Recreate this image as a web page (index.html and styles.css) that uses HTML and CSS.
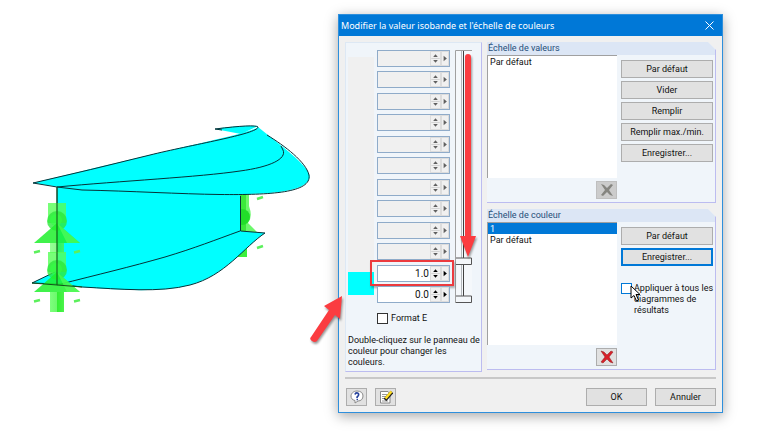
FILE: index.html
```html
<!DOCTYPE html>
<html lang="fr">
<head>
    <meta charset="UTF-8">
    <meta name="viewport" content="width=device-width, initial-scale=1.0">
    <title>Modifier la valeur isobande et l'échelle de couleurs</title>
    <link rel="stylesheet" href="styles.css">
</head>
<body>
    <main class="scene">
        <svg class="model" viewBox="0 0 338 442" aria-label="Modèle">
            <defs>
                <linearGradient id="post" x1="0" x2="1" y1="0" y2="0">
                    <stop offset="0" stop-color="#7dff7d"/>
                    <stop offset="0.5" stop-color="#6cf86c"/>
                    <stop offset="0.5" stop-color="#30ee30"/>
                    <stop offset="1" stop-color="#4cf34c"/>
                </linearGradient>
                <g id="support">
                    <rect x="-9" y="-37" width="18" height="20" fill="#5f5" opacity="0.8"/>
                    <circle cx="0" cy="-19" r="10" fill="#2de83c" opacity="0.8"/>
                    <circle cx="-1" cy="-20" r="6" fill="#3f4" opacity="0.6"/>
                    <path d="M0-17L-23 3H23Z" fill="#1ff02c" opacity="0.85"/>
                    <path d="M0-17L23 3H10Z" fill="#6f6" opacity="0.5"/>
                    <path d="M-23 12.500L-17 11M17 12.500L23 11" stroke="#5cf05c" stroke-width="2.500"/>
                </g>
            </defs>
            <!-- rear support -->
            <path d="M240 194H249V206Q253 217 248 223L257 232H240Z" fill="#6cf86c"/>
            <path d="M240 194H246V231H240Z" fill="#3be83b"/>
            <circle cx="242" cy="217" r="8" fill="#22dd2a"/>
            <rect x="234" y="244" width="13" height="13" fill="#3cf03c"/>
            <path d="M257 199L263 197M257 248L263 246" stroke="#5cf05c" stroke-width="2.500"/>
            <!-- girder -->
            <path d="M57 186L240 190V231L265 233C244 247 225 276 190 285C160 293 120 290 82 287L57 285Z" fill="#0ff"/>
            <path d="M32 283L57 271V285Z" fill="#0ff"/>
            <path d="M215 129L241 134L258 126Q240 125 215 129Z" fill="#0ff"/>
            <path d="M33 183C110 164 180 148 235 135Q257 129 258 127L283 147Q314 172 309 179C303 194 260 195 200 194L80 190Z" fill="#0ff"/>
            <g fill="none" stroke="#063238" stroke-width="1">
                <path d="M215 129Q255 124 258 127C258 134 190 145 150 155Q90 170 33 183L57 187L82 190C130 191 180 194 220 194.500C270 195 312 193 309 175C306 162 285 146 267 135"/>
                <path d="M215 129L222 130M57 187C120 181 200 177 240 171C270 167 287 159 283 150L281 146"/>
                <path d="M57 187V285M240.500 196V231L265 233C244 247 225 276 190 285C160 293 120 289 82 287L57 284L32 283L57 271"/>
                <path d="M57 285C100 274 130 267 165 257C195 248 215 240 240 231"/>
            </g>
            <use href="#support" x="57" y="240"/>
            <rect x="50" y="243" width="14" height="10" fill="url(#post)" opacity="0.8"/>
            <use href="#support" x="57" y="289"/>
            <rect x="50" y="292" width="14" height="20" fill="url(#post)"/>
            <path d="M57 187V285M32 283L57 285L82 287" fill="none" stroke="#14501c" stroke-width="1"/>
        </svg>
    </main>

    <section class="dialog">
        <header class="titlebar">
            <h1>Modifier la valeur isobande et l'échelle de couleurs</h1>
            <button class="close" aria-label="Fermer">
                <svg viewBox="0 0 9 9"><path d="M0.500 0.500L8.500 8.500M8.500 0.500L0.500 8.500"/></svg>
            </button>
        </header>

        <div class="content">
            <div class="panel values">
                <div class="value-area">
                    <div class="swatches">
                        <div class="no-color"></div>
                        <button class="swatch" aria-label="Couleur de l'isobande"></button>
                    </div>
                    <div class="value-list" id="values"></div>
                    <svg class="range" viewBox="0 0 18 253" preserveAspectRatio="none">
                        <rect x="1" y="0" width="16" height="253" fill="#f5f8fb"/>
                        <path d="M0.500 253V0.500H17" stroke="#a0a0a0"/>
                        <path d="M6.500 1V252" stroke="#b4b8bc"/>
                        <path d="M8.500 1V252" stroke="#404040"/>
                        <path class="thumb" d="M1 208H16.500V214.500H1"/>
                        <path class="thumb" d="M1 246H16.500V252.500H1"/>
                    </svg>
                    <svg class="arrow-down" viewBox="0 0 20 204">
                        <path d="M7 3Q7 0 10 0T13 3V182H18L10 203L2 182H7Z"/>
                    </svg>
                </div>
                <label class="check format"><input type="checkbox"><span>Format E</span></label>
                <p class="hint">Double-cliquez sur le panneau de couleur pour changer les couleurs.</p>
                <svg class="arrow-up" viewBox="0 0 36 50">
                    <path d="M1 43L19 16L14 12L32 2L30 25L25 21L7 47Q5 49 2 47T1 43Z"/>
                </svg>
            </div>

            <div class="scales">
                <section class="panel scale">
                    <h2>Échelle de valeurs</h2>
                    <div class="scale-body">
                        <div class="list-side">
                            <select class="list" size="5" aria-label="Échelle de valeurs">
                                <option>Par défaut</option>
                            </select>
                            <button class="btn icon-btn" disabled aria-label="Supprimer">
                                <svg viewBox="0 0 14 14" fill="#858580"><path d="M1 1L4 2L7 5L11 1L13 2L9 7L13 13L10 12L7 9L3 13L1 12L5 7Z"/></svg>
                            </button>
                        </div>
                        <div class="actions">
                            <button class="btn">Par défaut</button>
                            <button class="btn">Vider</button>
                            <button class="btn">Remplir</button>
                            <button class="btn">Remplir max./min.</button>
                            <button class="btn">Enregistrer...</button>
                        </div>
                    </div>
                </section>

                <section class="panel scale">
                    <h2>Échelle de couleur</h2>
                    <div class="scale-body">
                        <div class="list-side">
                            <select class="list" size="5" aria-label="Échelle de couleur">
                                <option class="current">1</option>
                                <option>Par défaut</option>
                            </select>
                            <button class="btn icon-btn" aria-label="Supprimer">
                                <svg viewBox="0 0 14 14" fill="#d8202a" stroke="#8c1a1a" stroke-width="0.500"><path d="M1 1L4 2L7 5L11 1L13 2L9 7L13 13L10 12L7 9L3 13L1 12L5 7Z"/></svg>
                            </button>
                        </div>
                        <div class="actions">
                            <button class="btn">Par défaut</button>
                            <button class="btn default">Enregistrer...</button>
                            <label class="check apply"><input type="checkbox"><span>Appliquer à tous les diagrammes de résultats</span>
                                <svg class="cursor" viewBox="0 0 11 17"><path d="M1 1V13L4 10.500L6.500 16L8.500 15L6 9.500H10Z"/></svg>
                            </label>
                        </div>
                    </div>
                </section>
            </div>
        </div>

        <footer class="footer">
            <button class="btn icon-btn" aria-label="Aide">
                <svg viewBox="0 0 14 14">
                    <path d="M7 1C11 1 13 3 13 6S11 11 8 11L5 13V10.500C2 10 1 8 1 6S3 1 7 1Z" fill="#fff" stroke="#8a8a8a"/>
                    <path d="M5 4.500Q5.500 2.500 7.500 3Q9.500 4 8 6Q7 6.500 7 8M6.500 9.500H8" fill="none" stroke="#26419c" stroke-width="1.700"/>
                </svg>
            </button>
            <button class="btn icon-btn" aria-label="Commentaire">
                <svg viewBox="0 0 14 14">
                    <path d="M1.500 1.500H9L11 4V13H1.500Z" fill="#fff" stroke="#888"/>
                    <path d="M3 4.500H8M3 6.500H7M3 8.500H6M3 11H9" stroke="#999"/>
                    <path d="M6 10L13 2" stroke="#222" stroke-width="3.500"/>
                    <path d="M6.500 8.500L12.500 1.500" stroke="#fd2" stroke-width="2.500"/>
                </svg>
            </button>
            <button class="btn wide push">OK</button>
            <button class="btn wide">Annuler</button>
        </footer>
    </section>

    <script>
        const values = ['', '', '', '', '', '', '', '', '', '', '1.0', '0.0'];
        const list = document.getElementById('values');

        values.forEach((value, i) => {
            const row = document.createElement('div');
            row.className = 'value' + (value ? '' : ' off') + (value === '1.0' ? ' marked' : '');
            const disabled = value ? '' : 'disabled';
            row.innerHTML = `
                <input type="text" value="${value}" aria-label="Valeur ${i + 1}" ${disabled}>
                <button class="spin" aria-label="Modifier la valeur ${i + 1}" ${disabled}>
                    <svg viewBox="0 0 9 14"><path d="M2 5.500L4.500 2.500L7 5.500ZM2 8.500L4.500 11.500L7 8.500Z"/><path class="split" d="M0 7H9"/></svg>
                </button>
                <button class="more" aria-label="Options ${i + 1}" ${disabled}>
                    <svg viewBox="0 0 6 14"><path d="M1.500 4L5 7L1.500 10Z"/></svg>
                </button>`;
            list.appendChild(row);
        });
    </script>
</body>
</html>
```
FILE: styles.css
```css
* {
    box-sizing: border-box;
}

body {
    margin: 0;
    display: flex;
    align-items: flex-start;
    background-color: #fff;
    color: #111;
    font-family: Roboto, "Liberation Sans", sans-serif;
    font-size: 9px;
    line-height: 11px;
}

h1, h2, p {
    margin: 0;
    font-weight: normal;
}

button, input, select {
    font: inherit;
    color: inherit;
    margin: 0;
    padding: 0;
}

svg {
    display: block;
}

.scene {
    flex: 1;
    min-width: 0;
}

.model {
    width: 100%;
}

.dialog {
    flex: 0 1 385px;
    margin: 14px 37px 28px 0;
    background-color: #f0f0f0;
    border: 1px solid #2e8fdc;
    box-shadow: 0 3px 12px rgba(0, 0, 0, 0.35);
}

.titlebar {
    display: flex;
    align-items: center;
    justify-content: space-between;
    height: 21px;
    padding: 0 8px 0 2px;
    background-color: #0078d7;
    color: #fff;
}

.titlebar h1 {
    font-family: "Noto Sans", sans-serif;
    font-size: 9px;
}

.close {
    border: none;
    background: none;
}

.close svg {
    width: 9px;
    height: 9px;
    fill: none;
    stroke: #fff;
}

.content {
    display: flex;
    gap: 5px;
    margin: 6px 6px 0;
    padding-bottom: 5px;
    border-bottom: 2px solid #c8c8c8;
}

.panel {
    background-color: #f0f5fa;
    border-right: 1px solid #bcbcf0;
    border-bottom: 1px solid #bcbcf0;
}

.values {
    position: relative;
    flex: 0 0 137px;
    display: flex;
    flex-direction: column;
    padding: 7px 0 3px 2px;
    border-left: 1px solid #dde8f4;
    border-top: 1px solid #dde8f4;
}

.value-area {
    position: relative;
    flex: 1;
    display: flex;
}

.swatches {
    display: flex;
    flex-direction: column;
    width: 29px;
    padding: 7px 3px 8px 0;
}

.no-color {
    flex: 1;
    background-color: #f0f0f0;
}

.swatch {
    height: 23px;
    border: none;
    background-color: #0ff;
}

.value-list {
    display: flex;
    flex-direction: column;
    justify-content: space-between;
    width: 73px;
    margin-right: 5px;
}

.value {
    position: relative;
    display: flex;
    height: 17px;
    border: 1px solid #8fabc9;
    background-color: #fff;
}

.value input {
    flex: 1;
    min-width: 0;
    padding-right: 1px;
    border: none;
    background: none;
    text-align: right;
    font-size: 10px;
}

.spin, .more {
    border: 1px solid #dcdcdc;
    background-color: #f0f0f0;
}

.spin svg {
    width: 9px;
    height: 13px;
}

.more svg {
    width: 6px;
    height: 13px;
}

.split {
    stroke: #d0d0d0;
}

.off {
    background-color: #f0f0f0;
}

.off svg {
    fill: #606060;
}

.marked::after {
    content: "";
    position: absolute;
    inset: -6px -5px -5px -8px;
    border: 2px solid #ec3a3e;
    box-shadow: 1px 2px 2px rgba(0, 0, 0, 0.3);
}

.range {
    width: 18px;
    height: 100%;
    fill: none;
}

.thumb {
    fill: #f4f7fa;
    stroke: #555;
}

.arrow-down {
    position: absolute;
    top: 4px;
    right: 3px;
    width: 20px;
    height: 204px;
}

.arrow-up {
    position: absolute;
    left: -36px;
    bottom: 27px;
    width: 36px;
    height: 50px;
}

.arrow-down, .arrow-up {
    fill: #fb3c40;
    filter: drop-shadow(1px 2px 1px rgba(0, 0, 0, 0.4));
}

.check {
    display: flex;
    align-items: flex-start;
    gap: 3px;
}

.check input {
    appearance: none;
    flex: none;
    width: 11px;
    height: 11px;
    border: 1px solid #333;
    background-color: #fff;
}

.format {
    margin: 10px 0 11px 29px;
}

.scales {
    flex: 1;
    min-width: 0;
    display: flex;
    flex-direction: column;
    gap: 6px;
}

.scale {
    clip-path: polygon(0 0, calc(100% - 8px) 0, 100% 8px, 100% 100%, 0 100%);
}

.scale h2 {
    height: 13px;
    padding-left: 1px;
    background-color: #dce6f5;
    color: #1f4e79;
    font-size: 9px;
    line-height: 13px;
}

.scale-body {
    display: flex;
    gap: 4px;
    padding-right: 2px;
}

.list-side {
    flex: 1;
    display: flex;
    flex-direction: column;
    align-items: flex-end;
    gap: 3px;
    padding-bottom: 3px;
}

.list {
    width: 100%;
    height: 123px;
    border: none;
    border-left: 1px solid #a0a0a0;
    border-top: 1px solid #a0a0a0;
    border-radius: 0;
    background-color: #fff;
    overflow: hidden;
}

.list option {
    min-height: 11px;
    padding: 1px 2px 0;
}

.list .current {
    background-color: #0078d7;
    color: #fff;
}

.actions {
    display: flex;
    flex-direction: column;
    gap: 3px;
    width: 92px;
    padding-top: 5px;
}

.btn {
    height: 18px;
    border: 1px solid #adadad;
    background-color: #e1e1e1;
}

.btn:disabled {
    background-color: #ccc;
    border-color: #bfbfbf;
}

.default {
    border: 2px solid #0078d7;
}

.icon-btn {
    display: flex;
    align-items: center;
    justify-content: center;
    width: 21px;
}

.icon-btn svg {
    width: 14px;
    height: 14px;
}

.apply {
    position: relative;
    gap: 2px;
    margin: 14px -2px 0 0;
}

.apply input {
    border-color: #0078d7;
}

.cursor {
    position: absolute;
    left: 9px;
    top: 2px;
    width: 11px;
    height: 17px;
    fill: #fff;
    stroke: #000;
}

.footer {
    display: flex;
    gap: 8px;
    padding: 9px 6px 6px 7px;
}

.wide {
    width: 61px;
}

.push {
    margin-left: auto;
}
```
